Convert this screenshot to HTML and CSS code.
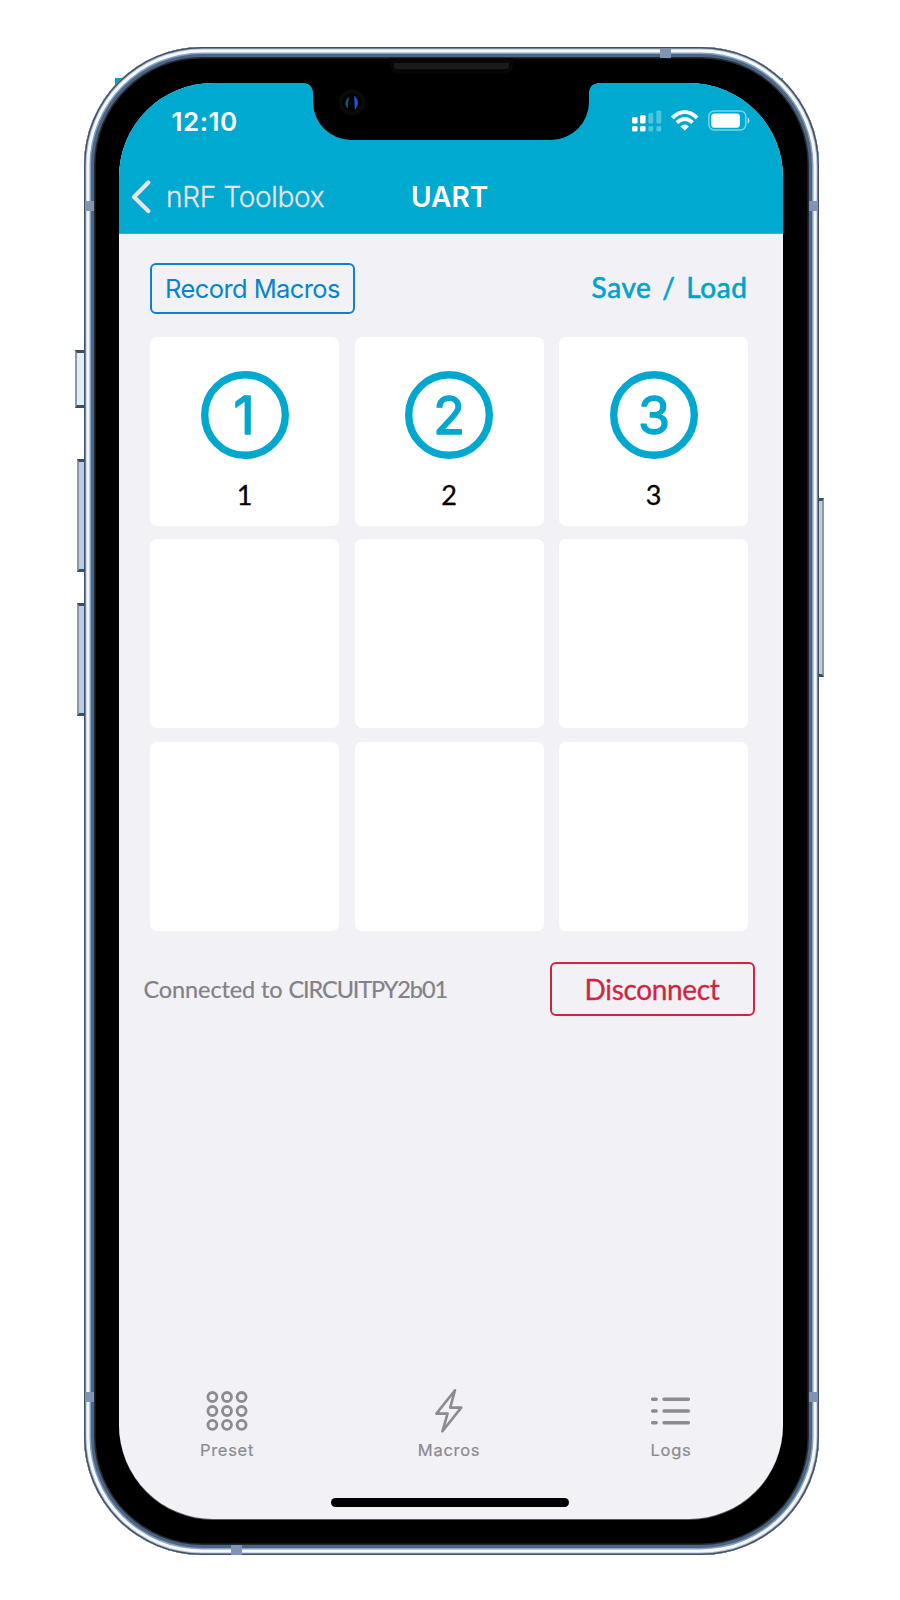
FILE: index.html
```html
<!DOCTYPE html>
<html lang="en">
<head>
<meta charset="utf-8">
<title>UART</title>
<link rel="stylesheet" href="styles.css">
</head>
<body>
<div class="device">
  <i class="corner-tab"></i><i class="corner-tab corner-tab-right"></i>
  <i class="side-button mute"></i>
  <i class="side-button volume-up"></i>
  <i class="side-button volume-down"></i>
  <i class="side-button power"></i>
  <div class="frame">
    <i class="band band-top"></i><i class="band band-bottom"></i>
    <i class="band band-left"></i><i class="band band-right"></i>
    <i class="band band-left band-low"></i><i class="band band-right band-low"></i>
    <i class="speaker"></i>
    <main class="screen">
      <header class="header">
        <div class="status">
          <span class="time">12:10</span>
          <svg class="status-icons" width="120" height="24" viewBox="0 0 120 24">
            <g fill="#fff">
              <rect x="2" y="7" width="5.6" height="6.4" rx="1.5"/><rect x="2" y="16" width="5.6" height="5.4" rx="1.5"/>
              <rect x="10" y="5" width="5.6" height="8.4" rx="1.5"/><rect x="10" y="16" width="5.6" height="5.4" rx="1.5"/>
              <g opacity=".3"><rect x="18.3" y="3" width="5" height="10.4" rx="1.5"/><rect x="18.3" y="16" width="5" height="5.4" rx="1.5"/>
              <rect x="26.3" y="0.5" width="5" height="12.9" rx="1.5"/><rect x="26.3" y="16" width="5" height="5.4" rx="1.5"/></g>
            </g>
            <g fill="none" stroke="#fff" stroke-width="3.8"><path d="M42.3 7.8Q54.7 -3.8 67.1 7.8"/><path d="M46.8 12.6Q54.7 5.2 62.6 12.6"/></g>
            <path d="M54.7 20.6L50.4 16.4Q54.7 12.4 59 16.4Z" fill="#fff"/>
            <rect x="78.8" y="1" width="37" height="19" rx="5.5" fill="none" stroke="#fff" stroke-opacity=".5" stroke-width="1.4"/>
            <rect x="81.3" y="3.5" width="28.6" height="14.2" rx="3" fill="#fff"/>
            <path d="M118 7.8q2.4 2.8 0 5.6z" fill="#fff" stroke="#fff" fill-opacity=".6" stroke-opacity=".4"/>
          </svg>
        </div>
        <nav class="nav">
          <svg class="back" width="20" height="34" viewBox="0 0 20 34"><path d="M17.3 2.5L3 17L17.3 31" fill="none" stroke="#e9e2e6" stroke-width="4.2" stroke-linecap="round" stroke-linejoin="round"/></svg>
          <span class="back-label">nRF Toolbox</span>
          <h1 class="title">UART</h1>
        </nav>
      </header>
      <div class="notch">
        <svg width="28" height="28" viewBox="0 0 28 28"><circle cx="13" cy="13.5" r="13" fill="#0b0a0a"/><circle cx="13" cy="13.5" r="9.5" fill="#030303"/><path d="M10 8.5Q4.5 13 8.5 19Q8 13 10 8.5Z" fill="#2b7192" stroke="#174b68"/><path d="M16 8.5Q20 13 16.5 18.5Z" fill="#175adc" stroke="#175adc" stroke-width="1.5"/></svg>
      </div>
      <div class="toolbar">
        <button class="record">Record Macros</button>
        <span class="save">Save / Load</span>
      </div>
      <section class="grid">
        <div class="card"><svg class="badge" viewBox="0 0 88 88"><circle cx="44" cy="44" r="40.3"/><text x="43" y="62.5">1</text></svg><span class="label">1</span></div>
        <div class="card"><svg class="badge" viewBox="0 0 88 88"><circle cx="44" cy="44" r="40.3"/><text x="44" y="62.5">2</text></svg><span class="label">2</span></div>
        <div class="card"><svg class="badge" viewBox="0 0 88 88"><circle cx="44" cy="44" r="40.3"/><text x="44" y="62.5">3</text></svg><span class="label">3</span></div>
        <div class="card"></div><div class="card"></div><div class="card"></div>
        <div class="card"></div><div class="card"></div><div class="card"></div>
      </section>
      <div class="connection">
        <span class="peer">Connected to <span class="peer-name">CIRCUITPY2b01</span></span>
        <button class="disconnect">Disconnect</button>
      </div>
      <footer class="tabs">
        <div class="tab">
          <svg width="44" height="44" viewBox="0 0 44 44"><g fill="none" stroke="#8c8b91" stroke-width="2.8"><circle cx="7.4" cy="8" r="4.5"/><circle cx="22" cy="8" r="4.5"/><circle cx="36.6" cy="8" r="4.5"/><circle cx="7.4" cy="22" r="4.5"/><circle cx="22" cy="22" r="4.5"/><circle cx="36.6" cy="22" r="4.5"/><circle cx="7.4" cy="35.8" r="4.5"/><circle cx="22" cy="35.8" r="4.5"/><circle cx="36.6" cy="35.8" r="4.5"/></g></svg>
          <span>Preset</span>
        </div>
        <div class="tab">
          <svg width="44" height="44" viewBox="0 0 44 44"><path d="M28 1.2L9.4 24.6H20.6L15.4 42.3L34.2 18.6H23.2Z" fill="none" stroke="#8c8b91" stroke-width="2.6" stroke-linejoin="round"/></svg>
          <span>Macros</span>
        </div>
        <div class="tab">
          <svg width="44" height="44" viewBox="0 0 44 44"><g stroke="#8c8b91" stroke-width="3.4" stroke-linecap="round"><path d="M3.6 10.2H7.2M3.6 22H7.2M3.6 33.8H7.2M15 10.2H39.4M15 22H39.4M15 33.8H39.4"/></g></svg>
          <span>Logs</span>
        </div>
      </footer>
      <div class="home"></div>
    </main>
  </div>
</div>
</body>
</html>
```

FILE: styles.css
```css
* { box-sizing: border-box; }
body { margin: 0; height: 1600px; overflow: hidden; background: #fff; font-family: Inter, sans-serif; }
button { font: inherit; background: none; margin: 0; padding: 0; }

.device { position: relative; width: 735px; height: 1508px; margin: 47px 0 0 84px; }
.frame {
  position: relative; height: 100%; padding: 35.5px 36.5px 36.5px 35px; border-radius: 118px; background: #000;
  box-shadow: inset 0 0 0 1.5px #45505f, inset 0 0 0 2.5px #a9bcd2, inset 0 0 0 5.5px #f4f8fd,
    inset 0 0 0 7px #87a0bf, inset 0 0 0 10px #4b6585, inset 0 0 0 11.5px #262a30;
}
.screen {
  position: relative; display: flex; flex-direction: column; height: 100%; overflow: hidden;
  border-radius: 94px; background: #f2f1f6; box-shadow: 0 1px 0 #55555a;
}
.corner-tab { position: absolute; left: 31px; top: 31px; width: 12px; height: 12px; background: #00a0c8; }
.corner-tab-right { left: 687px; }

.side-button {
  position: absolute; left: -7px; width: 8px; border: 1px solid #8b98a8; border-width: 3px 1px 3px 2px;
  border-top-color: #33506d; border-bottom-color: #33506d; background: #b9cde5;
}
.mute { left: -9px; top: 303px; height: 58px; width: 10px; background: #e2edf8; }
.volume-up { top: 412px; height: 113px; }
.volume-down { top: 556px; height: 113px; }
.power { left: 733px; top: 451px; width: 7px; height: 179px; border-width: 3px 2px 3px 1px; }

.band { position: absolute; background: #8095b5; }
.band-top { left: 576px; top: 2px; width: 11px; height: 9px; }
.band-bottom { left: 147px; bottom: 0; width: 11px; height: 10px; }
.band-left { left: 1px; top: 154px; width: 9px; height: 10px; }
.band-right { right: 1px; top: 154px; width: 9px; height: 10px; }
.band-low { top: 1345px; }
.speaker {
  position: absolute; left: 306px; top: 11px; width: 123px; height: 15px;
  border: 4px solid #070707; border-top-width: 5px; border-radius: 0 0 7px 7px; background: #1b1a19;
}

.header { flex: none; height: 151.5px; background: #00a9d0; border-bottom: 1px solid #43aec6; color: #fff; }
.status { display: flex; justify-content: space-between; padding: 24px 33px 0 52.5px; height: 85px; }
.time { font-size: 26px; line-height: 30px; font-weight: 600; letter-spacing: .5px; }
.status-icons { margin-top: 3px; }
.nav { display: flex; align-items: center; height: 58px; padding-left: 12px; }
.back { flex: none; }
.back-label { flex: none; width: 260px; padding-left: 15px; font-size: 28px; font-weight: 350; letter-spacing: -.3px; -webkit-text-stroke: .3px #e9e2e6; color: #e9e2e6; white-space: nowrap; }
.title { margin: 0; font-size: 28px; font-weight: 600; }

.notch {
  position: absolute; left: 193.5px; top: -2px; width: 276px; height: 59.5px; padding: 8px 0 0 26px;
  border-radius: 0 0 38px 38px; background: #000;
}
.notch::before, .notch::after { content: ""; position: absolute; top: 2px; width: 9px; height: 9px; }
.notch::before { left: -9px; background: radial-gradient(circle at 0 100%, transparent 8.5px, #000 9px); }
.notch::after { right: -9px; background: radial-gradient(circle at 100% 100%, transparent 8.5px, #000 9px); }

.toolbar { display: flex; flex: none; justify-content: space-between; padding: 29px 35px 0 31px; height: 102.6px; }
.record { width: 205px; height: 51px; border: 2px solid #0983cf; border-radius: 6px; color: #0983d0; font-size: 25.5px; letter-spacing: -.6px; }
.save { font: 400 28px/49px Lato, sans-serif; -webkit-text-stroke: .6px #00a2cc; letter-spacing: .6px; word-spacing: 3px; color: #00a2cc; }

.grid { display: grid; flex: none; grid-template-columns: repeat(3, 189px); grid-auto-rows: 189px; gap: 13.7px 15.5px; padding-left: 31px; }
.card { display: flex; flex-direction: column; align-items: center; padding-top: 34px; border-radius: 7px; background: #fff; }
.badge { width: 88px; height: 88px; }
.badge circle { fill: none; stroke: #00a8d0; stroke-width: 7.4; }
.badge text { fill: #00a8d0; stroke: #00a8d0; stroke-width: 1.4; stroke-linejoin: round; stroke-linecap: round; font: 400 52px Inter, sans-serif; text-anchor: middle; }
.label { margin-top: 19px; font: 400 27px/34px Lato, sans-serif; -webkit-text-stroke: .3px #000; color: #000; }

.connection { display: flex; flex: none; align-items: center; justify-content: space-between; margin-top: 30.5px; padding: 0 28px 0 24.5px; height: 55px; }
.peer { font: 400 23.5px Lato, sans-serif; letter-spacing: -.1px; -webkit-text-stroke: .2px #828187; color: #828187; white-space: nowrap; }
.peer-name { letter-spacing: -1.1px; }
.disconnect { width: 205px; height: 54.5px; border: 2px solid #cf2640; border-radius: 6px; color: #cf2640; font: 400 28px Lato, sans-serif; letter-spacing: -.35px; -webkit-text-stroke: .3px #cf2640; }

.tabs { display: grid; grid-template-columns: repeat(3, 222px); margin-top: auto; padding-bottom: 36px; margin-left: -3px; }
.tab { display: flex; flex-direction: column; align-items: center; gap: 5px; font-size: 16.5px; line-height: 24px; font-weight: 400; letter-spacing: .7px; -webkit-text-stroke: .2px #8c8b91; color: #8c8b91; }
.home { flex: none; width: 238px; height: 9px; margin: 0 0 12px 211.5px; border-radius: 5px; background: #000; }
```
